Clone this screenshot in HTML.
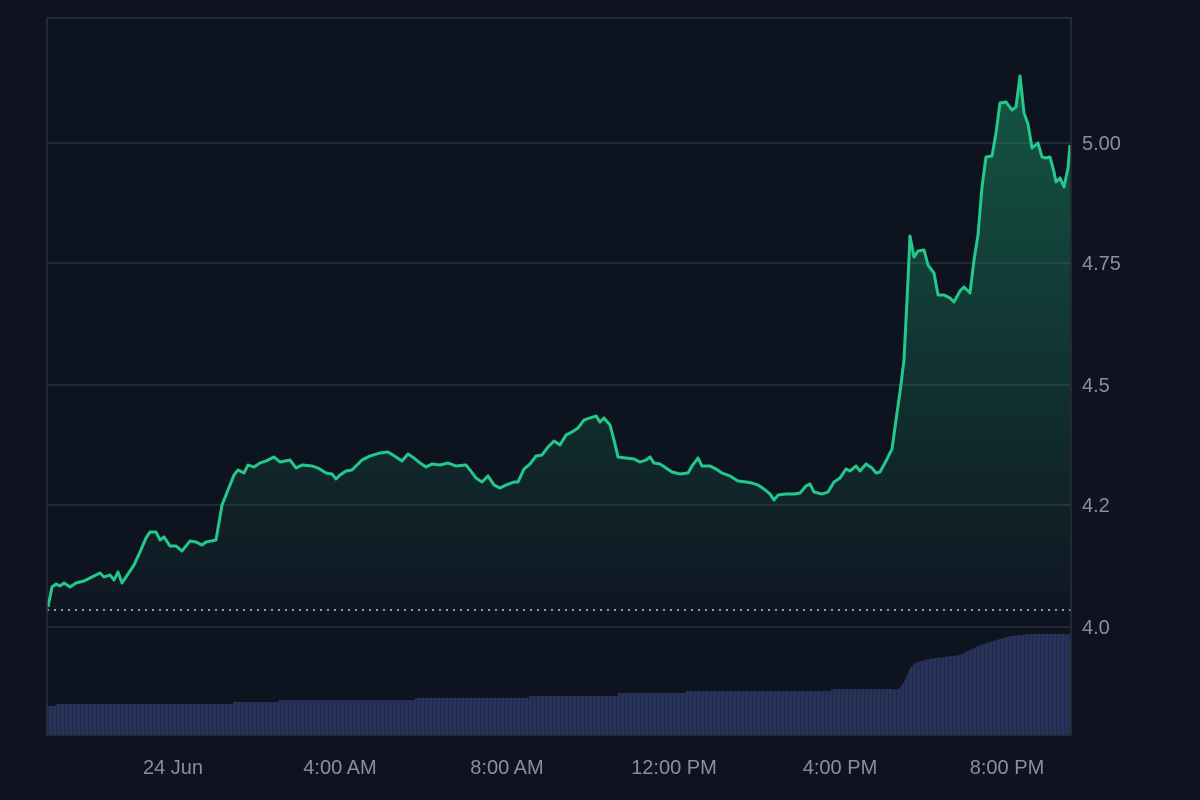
<!DOCTYPE html><html><head><style>html,body{margin:0;background:#0f1320;width:1200px;height:800px;overflow:hidden}svg text{font-family:"Liberation Sans",sans-serif;font-size:20px;fill:#8a8f9c}</style></head><body>
<svg width="1200" height="800" viewBox="0 0 1200 800">
<defs><linearGradient id="g" x1="0" y1="80" x2="0" y2="610" gradientUnits="userSpaceOnUse"><stop offset="0" stop-color="#1a8a60" stop-opacity="0.55"/><stop offset="1" stop-color="#1a8a60" stop-opacity="0.03"/></linearGradient>
<pattern id="p" width="4" height="10" patternUnits="userSpaceOnUse"><rect width="4" height="10" fill="#283158"/><rect width="1" height="10" fill="#222a4c"/></pattern></defs>
<rect x="47" y="18" width="1024" height="717" fill="#0e1320"/>
<g stroke="#2a2f3c" stroke-width="1.5"><line x1="47" y1="143" x2="1071" y2="143"/><line x1="47" y1="263" x2="1071" y2="263"/><line x1="47" y1="385" x2="1071" y2="385"/><line x1="47" y1="505" x2="1071" y2="505"/><line x1="47" y1="627" x2="1071" y2="627"/></g>
<polygon fill="url(#p)" points="47,735 47,706 56,706 56,704 233,704 233,702 279,702 279,700 415,700 415,698 529,698 529,696 618,696 618,693 686,693 686,691 831,691 831,689 893,689 896,690 900,688 905,680 910,668 915,663 925,660 935,658 960,655 970,650 980,645 990,642 1000,639 1010,636 1030,634 1070,634 1070,735"/>
<line x1="47" y1="610" x2="1071" y2="610" stroke="#c8ccd4" stroke-width="1.5" stroke-dasharray="2,5"/>
<polygon fill="url(#g)" points="48,610 48,607 52,587 56,584 60,586 64,583 70,587 76,583 84,581 92,577 100,573 104,577 110,575 114,580 118,572 122,583 128,574 134,565 140,552 146,538 150,532 156,532 160,540 164,537 170,546 176,546 182,551 186,546 190,541 196,542 202,545 206,542 216,540 222,505 228,490 234,475 238,470 244,473 248,465 254,467 260,463 266,461 274,457 280,462 290,460 296,468 302,465 312,466 318,468 326,473 332,474 336,479 340,475 346,471 352,470 358,464 362,460 370,456 380,453 388,452 396,457 402,461 408,454 414,458 420,463 426,467 432,464 440,465 448,463 456,466 466,465 470,470 476,478 482,482 488,476 494,485 500,488 506,485 514,482 518,482 524,469 530,464 536,456 542,455 548,447 554,441 560,445 566,435 572,432 578,428 584,420 590,418 596,416 600,422 604,418 610,425 614,440 618,457 626,458 634,459 640,462 646,460 650,457 654,463 660,464 666,468 672,472 680,474 688,473 692,466 698,458 702,466 710,466 716,469 722,473 730,476 738,481 746,482 752,483 758,485 764,489 770,494 774,500 778,495 786,494 794,494 800,493 806,486 810,484 814,492 822,494 828,492 834,482 840,478 846,469 850,471 856,466 860,471 866,464 872,468 876,473 880,472 886,461 892,449 896,420 900,392 904,360 908,280 910,236 914,257 918,251 924,250 928,265 934,273 938,295 944,295 950,298 954,302 960,291 964,287 970,293 974,260 978,235 982,187 986,157 992,156 996,133 1000,103 1006,102 1012,110 1016,107 1020,76 1024,113 1028,124 1032,148 1038,143 1042,157 1046,158 1050,157 1054,172 1056,182 1060,178 1064,187 1068,168 1070,145 1070,610"/>
<polyline fill="none" stroke="#22c98b" stroke-width="3" stroke-linejoin="round" points="48,607 52,587 56,584 60,586 64,583 70,587 76,583 84,581 92,577 100,573 104,577 110,575 114,580 118,572 122,583 128,574 134,565 140,552 146,538 150,532 156,532 160,540 164,537 170,546 176,546 182,551 186,546 190,541 196,542 202,545 206,542 216,540 222,505 228,490 234,475 238,470 244,473 248,465 254,467 260,463 266,461 274,457 280,462 290,460 296,468 302,465 312,466 318,468 326,473 332,474 336,479 340,475 346,471 352,470 358,464 362,460 370,456 380,453 388,452 396,457 402,461 408,454 414,458 420,463 426,467 432,464 440,465 448,463 456,466 466,465 470,470 476,478 482,482 488,476 494,485 500,488 506,485 514,482 518,482 524,469 530,464 536,456 542,455 548,447 554,441 560,445 566,435 572,432 578,428 584,420 590,418 596,416 600,422 604,418 610,425 614,440 618,457 626,458 634,459 640,462 646,460 650,457 654,463 660,464 666,468 672,472 680,474 688,473 692,466 698,458 702,466 710,466 716,469 722,473 730,476 738,481 746,482 752,483 758,485 764,489 770,494 774,500 778,495 786,494 794,494 800,493 806,486 810,484 814,492 822,494 828,492 834,482 840,478 846,469 850,471 856,466 860,471 866,464 872,468 876,473 880,472 886,461 892,449 896,420 900,392 904,360 908,280 910,236 914,257 918,251 924,250 928,265 934,273 938,295 944,295 950,298 954,302 960,291 964,287 970,293 974,260 978,235 982,187 986,157 992,156 996,133 1000,103 1006,102 1012,110 1016,107 1020,76 1024,113 1028,124 1032,148 1038,143 1042,157 1046,158 1050,157 1054,172 1056,182 1060,178 1064,187 1068,168 1070,145"/>
<rect x="47" y="18" width="1024" height="717" fill="none" stroke="#2a2f3c" stroke-width="1.5"/>
<text x="1082" y="150">5.00</text><text x="1082" y="270">4.75</text><text x="1082" y="392">4.5</text><text x="1082" y="512">4.2</text><text x="1082" y="634">4.0</text>
<text x="173" y="774" text-anchor="middle">24 Jun</text><text x="340" y="774" text-anchor="middle">4:00 AM</text><text x="507" y="774" text-anchor="middle">8:00 AM</text><text x="674" y="774" text-anchor="middle">12:00 PM</text><text x="840" y="774" text-anchor="middle">4:00 PM</text><text x="1007" y="774" text-anchor="middle">8:00 PM</text>
</svg></body></html>
